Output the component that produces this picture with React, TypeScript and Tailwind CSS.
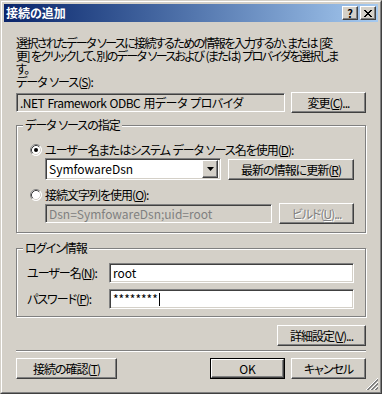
import type { ReactNode } from 'react'

type BtnProps = {
  children: ReactNode
  className?: string
  disabled?: boolean
}

function Btn({ children, className = '', disabled }: BtnProps) {
  return (
    <div
      className={`flex items-center justify-center h-[21px] bg-[#d4d0c8] border border-t-white border-l-white border-r-[#404040] border-b-[#404040] shadow-[inset_-1px_-1px_0_#808080] whitespace-nowrap ${
        disabled ? 'text-[#808080] [text-shadow:1px_1px_0_#fff]' : 'text-black'
      } ${className}`}
    >
      {children}
    </div>
  )
}

function Field({ children, className = '' }: { children?: ReactNode; className?: string }) {
  return (
    <div
      className={`flex items-center border border-t-[#808080] border-l-[#808080] border-r-white border-b-white shadow-[inset_1px_1px_0_#404040,inset_-1px_-1px_0_#d4d0c8] pl-[3px] whitespace-nowrap overflow-hidden ${className}`}
    >
      {children}
    </div>
  )
}

function Radio({ checked }: { checked?: boolean }) {
  return (
    <svg width="12" height="12" viewBox="0 0 12 12" className="shrink-0">
      <circle cx="6" cy="6" r="5.5" fill="#fff" />
      <path d="M2.11 9.89 A5.5 5.5 0 0 1 9.89 2.11" fill="none" stroke="#808080" />
      <path d="M9.89 2.11 A5.5 5.5 0 0 1 2.11 9.89" fill="none" stroke="#fff" />
      <path d="M2.82 9.18 A4.5 4.5 0 0 1 9.18 2.82" fill="none" stroke="#404040" />
      <path d="M9.18 2.82 A4.5 4.5 0 0 1 2.82 9.18" fill="none" stroke="#d4d0c8" />
      {checked && <circle cx="6" cy="6" r="2" fill="#000" />}
    </svg>
  )
}

function Group({ label, className = '', children }: { label: string; className?: string; children: ReactNode }) {
  return (
    <div className={`relative border border-[#808080] shadow-[inset_1px_1px_0_#fff,1px_1px_0_#fff] ${className}`}>
      <span className="absolute left-[6px] -top-[7px] px-[2px] bg-[#d4d0c8] leading-[12px]">{label}</span>
      {children}
    </div>
  )
}

function CloseGlyph() {
  const rows = [0, 1, 2, 3, 4, 5, 6]
  return (
    <svg width="8" height="7" viewBox="0 0 8 7" shapeRendering="crispEdges">
      {rows.map((r) => (
        <g key={r}>
          <rect x={r} y={r} width="2" height="1" fill="#000" />
          <rect x={6 - r} y={r} width="2" height="1" fill="#000" />
        </g>
      ))}
    </svg>
  )
}

export default function App() {
  return (
    <div className="w-[382px] h-[394px] bg-[#d4d0c8] border border-t-[#d4d0c8] border-l-[#d4d0c8] border-r-[#404040] border-b-[#404040] font-['Noto_Sans_CJK_JP',sans-serif] [font-feature-settings:'palt'] text-[12px] leading-[12px] tracking-[-1px] [word-spacing:1px] text-black">
      <div className="relative h-full flex flex-col border border-t-white border-l-white border-r-[#808080] border-b-[#808080] p-[2px]">
        {/* title bar */}
        <div className="flex items-center h-[18px] px-[2px] bg-gradient-to-r from-[#0a246a] to-[#a6caf0]">
          <span className="text-white font-bold text-[12px] leading-[12px] tracking-normal">接続の追加</span>
          <div className="ml-auto flex gap-[2px]">
            <Btn className="w-[16px] !h-[14px] font-bold text-[11px] leading-[11px] tracking-normal">?</Btn>
            <Btn className="w-[16px] !h-[14px]">
              <CloseGlyph />
            </Btn>
          </div>
        </div>

        <div className="flex flex-col px-[12px]">
          <div className="mt-[14px] flex flex-col whitespace-nowrap tracking-[-1.6px]">
            <p className="h-[13px] leading-[13px]">選択されたデータ ソースに接続するための情報を入力するか、または [変</p>
            <p className="h-[13px] leading-[13px]">更] をクリックして、別のデータ ソースおよび (または) プロバイダを選択しま</p>
            <p className="h-[13px] leading-[13px]">す。</p>
          </div>

          <p className="h-[13px] leading-[13px]">
            データ ソース(<u>S</u>):
          </p>
          <div className="mt-[4px] flex items-start justify-between">
            <Field className="mt-[1px] w-[269px] h-[19px] tracking-[-0.5px]">
              .NET Framework ODBC 用データ プロバイダ
            </Field>
            <Btn className="w-[75px]">
              変更(<u>C</u>)...
            </Btn>
          </div>

          <Group label="データ ソースの指定" className="mt-[12px] h-[108px] pt-[18px] pl-[13px] pr-[11px]">
            <div className="flex items-center gap-[3px] h-[12px]">
              <Radio checked />
              <span>
                ユーザー名またはシステム データ ソース名を使用(<u>D</u>):
              </span>
            </div>
            <div className="mt-[2px] pl-[15px] flex items-start gap-[7px]">
              <Field className="w-[176px] h-[22px] bg-white pr-[2px] tracking-normal">
                <span className="flex-1">SymfowareDsn</span>
                <Btn className="w-[16px] !h-[18px]">
                  <svg width="7" height="4" viewBox="0 0 7 4">
                    <path d="M0 0h7L3.5 4z" fill="#000" />
                  </svg>
                </Btn>
              </Field>
              <Btn className="mt-[1px] w-[126px]">
                最新の情報に更新(<u>R</u>)
              </Btn>
            </div>
            <div className="mt-[9px] flex items-center gap-[3px] h-[12px]">
              <Radio />
              <span>
                接続文字列を使用(<u>O</u>):
              </span>
            </div>
            <div className="mt-[2px] pl-[15px] flex items-start gap-[7px]">
              <Field className="mt-[1px] w-[227px] h-[19px] text-[#808080] tracking-normal">
                Dsn=SymfowareDsn;uid=root
              </Field>
              <Btn className="w-[75px]" disabled>
                ビルド(<u>U</u>)...
              </Btn>
            </div>
          </Group>

          <Group label="ログイン情報" className="mt-[15px] h-[69px] pt-[14px] pl-[10px] flex flex-col gap-[6px]">
            <div className="flex items-center">
              <span className="w-[82px]">
                ユーザー名(<u>N</u>):
              </span>
              <Field className="w-[245px] h-[20px] bg-white tracking-normal">root</Field>
            </div>
            <div className="flex items-center">
              <span className="w-[82px]">
                パスワード(<u>P</u>):
              </span>
              <Field className="w-[245px] h-[20px] bg-white tracking-normal">
                <span>********</span>
                <span className="ml-[1px] w-[1px] h-[13px] bg-black" />
              </Field>
            </div>
          </Group>

          <Btn className="mt-[8px] self-end w-[89px]">
            詳細設定(<u>V</u>)...
          </Btn>

          <div className="mt-[4px] h-[2px] border-t border-t-[#808080] border-b border-b-white" />

          <div className="mt-[6px] flex items-center">
            <Btn className="w-[101px]">
              接続の確認(<u>T</u>)
            </Btn>
            <div className="ml-auto flex gap-[6px]">
              <div className="border border-black">
                <Btn className="w-[73px] !h-[19px] tracking-normal">OK</Btn>
              </div>
              <Btn className="w-[75px]">キャンセル</Btn>
            </div>
          </div>
        </div>

        <svg width="13" height="13" viewBox="0 0 13 13" className="absolute right-[2px] bottom-[2px]">
          {[1, 5, 9].map((d) => (
            <g key={d}>
              <line x1={13} y1={d} x2={d} y2={13} stroke="#fff" />
              <line x1={13} y1={d + 1} x2={d + 1} y2={13} stroke="#808080" />
              <line x1={13} y1={d + 2} x2={d + 2} y2={13} stroke="#808080" />
            </g>
          ))}
        </svg>
      </div>
    </div>
  )
}
